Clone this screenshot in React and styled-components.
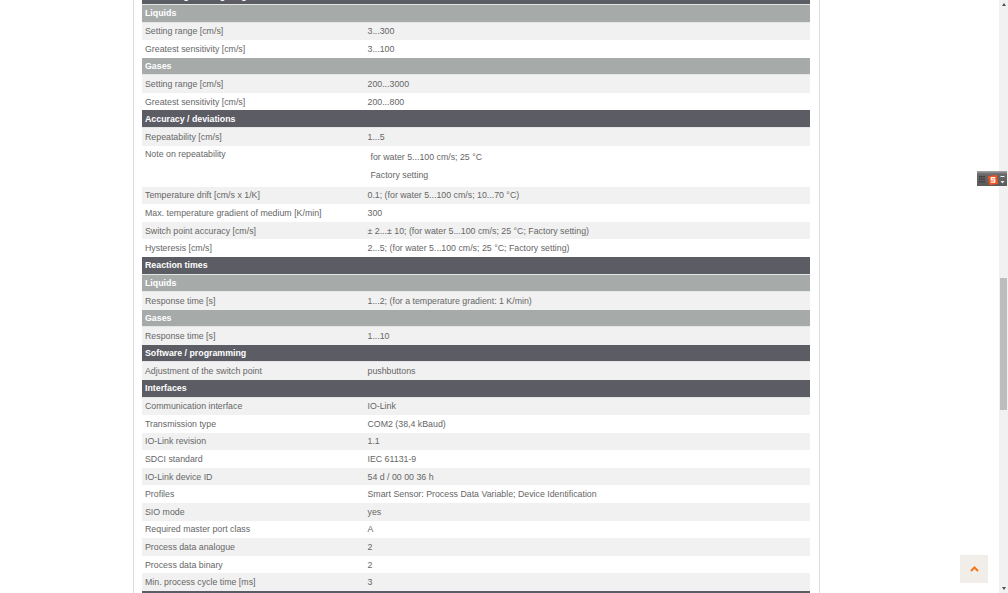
import React from "react";
import styled, { createGlobalStyle } from "styled-components";

const Global = createGlobalStyle`
  html, body { margin: 0; padding: 0; height: 100%; overflow: hidden; background: #fff; }
  body { font-family: "Liberation Sans", Arial, sans-serif; }
`;

const Viewport = styled.div`
  position: relative;
  width: 1008px;
  height: 593px;
  overflow: hidden;
  display: flex;
  background: #fff;
`;

const PageArea = styled.div`
  width: 999px;
  height: 593px;
  overflow: hidden;
`;

const Card = styled.div`
  box-sizing: border-box;
  width: 687px;
  margin-left: 133px;
  margin-top: -12.6px;
  padding: 0 8px;
  border-left: 1px solid #dcdcdc;
  border-right: 1px solid #dcdcdc;
  min-height: 640px;
`;

const Table = styled.div`
  display: flex;
  flex-direction: column;
  width: 668px;
`;

const Row = styled.div`
  box-sizing: border-box;
  height: 17.58px;
  display: flex;
  align-items: center;
  padding-left: 3px;
  font-size: 8.8px;
  color: ${p => (p.$kind === "head" || p.$kind === "sub" ? "#fff" : "#666")};
  font-weight: ${p => (p.$kind === "head" || p.$kind === "sub" ? 700 : 400)};
  background: ${p =>
    p.$kind === "head" ? "#5c5c64" : p.$kind === "sub" ? "#a6abaa" : p.$odd ? "#f1f1f1" : "#fff"};
  border-bottom: ${p => (p.$kind === "head" || p.$kind === "sub" ? "1px solid #e4e6e6" : "none")};
`;

const Label = styled.span`
  width: 222.5px;
  flex: none;
`;

const Value = styled.span`
  flex: 1;
`;

const NoteRow = styled.div`
  box-sizing: border-box;
  height: 41px;
  padding-left: 3px;
  display: flex;
  font-size: 8.8px;
  color: #666;
  background: #fff;
`;

const NoteLabel = styled(Label)`
  padding-top: 3px;
`;

const NoteLines = styled.div`
  padding: 6px 0 0 3px;
  display: flex;
  flex-direction: column;
  gap: 8.4px;
  line-height: 10px;
`;

const Scrollbar = styled.div`
  position: relative;
  width: 9px;
  height: 593px;
  flex: none;
  background: #f1f1f1;
`;

const Thumb = styled.div`
  position: absolute;
  left: 1px;
  top: 278px;
  width: 7px;
  height: 132px;
  background: #bdbdbd;
`;

const Arrow = styled.div`
  position: absolute;
  left: 2.5px;
  ${p => (p.$dir === "up" ? "top: 3px;" : "bottom: 3px;")}
  width: 0;
  height: 0;
  border-left: 2.5px solid transparent;
  border-right: 2.5px solid transparent;
  ${p => (p.$dir === "up" ? "border-bottom: 3px solid #505050;" : "border-top: 3px solid #505050;")}
`;

const Widget = styled.div`
  position: absolute;
  left: 977px;
  top: 171px;
  width: 30px;
  height: 15px;
  background: linear-gradient(#a8a8a8 0, #6a6a6a 3px, #5a5a5a 100%);
  display: flex;
  align-items: center;
  justify-content: space-between;
  padding: 2px 2px 0;
  box-sizing: border-box;
`;

const BackToTop = styled.div`
  position: absolute;
  left: 960px;
  top: 555px;
  width: 28px;
  height: 28px;
  background: #f1ede8;
  display: flex;
  align-items: center;
  justify-content: center;
`;

const rows = [
  ["head", "Measuring / setting range"],
  ["sub", "Liquids"],
  ["r", "Setting range [cm/s]", "3...300"],
  ["r", "Greatest sensitivity [cm/s]", "3...100"],
  ["sub", "Gases"],
  ["r", "Setting range [cm/s]", "200...3000"],
  ["r", "Greatest sensitivity [cm/s]", "200...800"],
  ["head", "Accuracy / deviations"],
  ["r", "Repeatability [cm/s]", "1...5"],
  ["note", "Note on repeatability", "for water 5...100 cm/s; 25 °C", "Factory setting"],
  ["r", "Temperature drift [cm/s x 1/K]", "0.1; (for water 5...100 cm/s; 10...70 °C)"],
  ["r", "Max. temperature gradient of medium [K/min]", "300"],
  ["r", "Switch point accuracy [cm/s]", "± 2...± 10; (for water 5...100 cm/s; 25 °C; Factory setting)"],
  ["r", "Hysteresis [cm/s]", "2...5; (for water 5...100 cm/s; 25 °C; Factory setting)"],
  ["head", "Reaction times"],
  ["sub", "Liquids"],
  ["r", "Response time [s]", "1...2; (for a temperature gradient: 1 K/min)"],
  ["sub", "Gases"],
  ["r", "Response time [s]", "1...10"],
  ["head", "Software / programming"],
  ["r", "Adjustment of the switch point", "pushbuttons"],
  ["head", "Interfaces"],
  ["r", "Communication interface", "IO-Link"],
  ["r", "Transmission type", "COM2 (38,4 kBaud)"],
  ["r", "IO-Link revision", "1.1"],
  ["r", "SDCI standard", "IEC 61131-9"],
  ["r", "IO-Link device ID", "54 d / 00 00 36 h"],
  ["r", "Profiles", "Smart Sensor: Process Data Variable; Device Identification"],
  ["r", "SIO mode", "yes"],
  ["r", "Required master port class", "A"],
  ["r", "Process data analogue", "2"],
  ["r", "Process data binary", "2"],
  ["r", "Min. process cycle time [ms]", "3"],
  ["head", ""],
];

function renderRows() {
  let odd = true;
  return rows.map((r, i) => {
    const [kind, a, b, c] = r;
    if (kind === "head" || kind === "sub") {
      odd = true;
      return <Row key={i} $kind={kind}>{a}</Row>;
    }
    const thisOdd = odd;
    odd = !odd;
    if (kind === "note") {
      return (
        <NoteRow key={i}>
          <NoteLabel>{a}</NoteLabel>
          <NoteLines><span>{b}</span><span>{c}</span></NoteLines>
        </NoteRow>
      );
    }
    return (
      <Row key={i} $odd={thisOdd}>
        <Label>{a}</Label>
        <Value>{b}</Value>
      </Row>
    );
  });
}

export default function App() {
  return (
    <Viewport>
      <Global />
      <PageArea>
        <Card>
          <Table>{renderRows()}</Table>
        </Card>
      </PageArea>
      <Scrollbar>
        <Arrow $dir="up" />
        <Thumb />
        <Arrow $dir="down" />
      </Scrollbar>
      <Widget>
        <svg width="6" height="9" viewBox="0 0 6 9">
          <g fill="#353535">
            <rect x="0" y="1" width="1.4" height="1.4" /><rect x="2.2" y="1" width="1.4" height="1.4" /><rect x="4.4" y="1" width="1.4" height="1.4" />
            <rect x="0" y="3.5" width="1.4" height="1.4" /><rect x="2.2" y="3.5" width="1.4" height="1.4" /><rect x="4.4" y="3.5" width="1.4" height="1.4" />
            <rect x="0" y="6" width="1.4" height="1.4" /><rect x="2.2" y="6" width="1.4" height="1.4" /><rect x="4.4" y="6" width="1.4" height="1.4" />
          </g>
        </svg>
        <svg width="10" height="10" viewBox="0 0 9 9">
          <rect x="0.4" y="0.4" width="8.2" height="8.2" rx="1" fill="#f1521f" transform="rotate(-10 4.5 4.5)" />
          <path d="M6.6 2.5H3V4.4H6V6.4H2.4" fill="none" stroke="#fff" strokeWidth="1.3" />
        </svg>
        <svg width="5" height="9" viewBox="0 0 5 9">
          <rect x="0.5" y="1" width="4" height="1" fill="#eee" />
          <path d="M0.5 6h4L2.5 8.5z" fill="#eee" />
        </svg>
      </Widget>
      <BackToTop>
        <svg width="9" height="6" viewBox="0 0 9 6">
          <path d="M1 5L4.5 1.5L8 5" fill="none" stroke="#f5761a" strokeWidth="2" />
        </svg>
      </BackToTop>
    </Viewport>
  );
}
